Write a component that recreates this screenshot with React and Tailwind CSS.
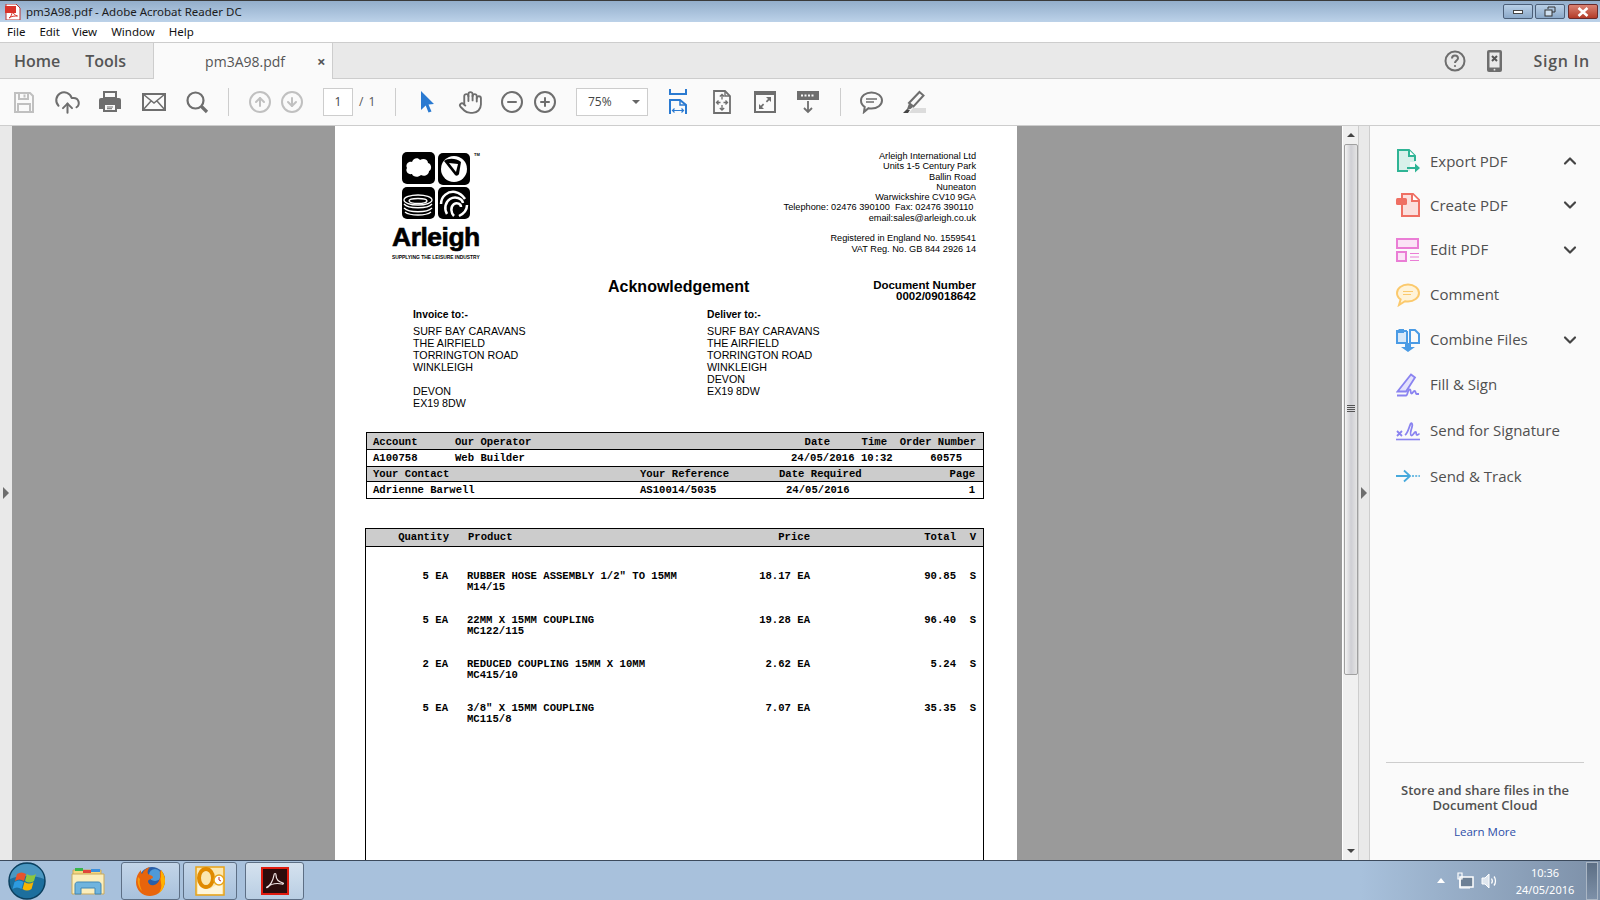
import { ChevronDown, ChevronUp, CircleArrowDown, CircleArrowUp, CircleMinus, CirclePlus, CloudUpload, Hand } from "lucide-react"

const gray = "#6e6e6e"

function SaveIcon() {
  return (
    <svg width="22" height="24" viewBox="0 0 22 24" fill="none" stroke="#c0c0c0" strokeWidth="2">
      <path d="M2 3h15l3 3v16H2z" />
      <path d="M6 3v6h9V3M11.500 4.500v3M5 22v-8h12v8" />
    </svg>
  )
}

function PrintIcon() {
  return (
    <svg width="24" height="24" viewBox="0 0 24 24">
      <path d="M6 2h12v6H6z" fill="none" stroke={gray} strokeWidth="2" />
      <path d="M3 8h18a2 2 0 0 1 2 2v9h-4v3H5v-3H1v-9a2 2 0 0 1 2-2z" fill={gray} />
      <path d="M7 15h10v5H7z" fill="#fafafa" />
      <path d="M9 17h6M9 18.700h5" stroke={gray} strokeWidth="1" />
    </svg>
  )
}

function MailIcon() {
  return (
    <svg width="24" height="20" viewBox="0 0 24 20" fill="none" stroke={gray} strokeWidth="2">
      <rect x="1" y="2" width="22" height="16" />
      <path d="M1 2l11 9 11-9M1 18l8-9M23 18l-8-9" strokeWidth="1.500" />
    </svg>
  )
}

function SearchIcon() {
  return (
    <svg width="24" height="24" viewBox="0 0 24 24" fill="none" stroke={gray}>
      <circle cx="10.500" cy="10.500" r="8" strokeWidth="2.200" />
      <path d="M16.500 16.500l5.500 5.500" strokeWidth="3.200" />
    </svg>
  )
}

function CursorIcon() {
  return (
    <svg width="16" height="24" viewBox="0 0 16 24">
      <path d="M2 1l13 13-5.500.5 3 7-3 1-2.800-7L2 20z" fill="#2a7ad1" />
    </svg>
  )
}

function FitWidthIcon() {
  return (
    <svg width="18" height="26" viewBox="0 0 18 26" fill="none" stroke="#2a7ad1" strokeWidth="2">
      <path d="M1 0v5h16V0" />
      <path d="M1 25V11h10l6 5v9" />
      <path d="M11 11v5h6" strokeWidth="1.500" />
      <path d="M3.500 21.500h11M5.500 19.500l-2 2 2 2M12.500 19.500l2 2-2 2" strokeWidth="1.200" />
    </svg>
  )
}

function FitPageIcon() {
  return (
    <svg width="18" height="24" viewBox="0 0 18 24" fill="none" stroke={gray} strokeWidth="1.800">
      <path d="M1 1h11l5 5v17H1z" />
      <path d="M12 1v5h5" strokeWidth="1.400" />
      <path d="M9 4.500v5M6.800 6.500L9 4.500l2.200 2M9 20v-5M6.800 18L9 20l2.200-2M3.500 12.500h4M5.500 10.500l-2 2 2 2M14.500 12.500h-4M12.500 10.500l2 2-2 2" strokeWidth="1.300" />
    </svg>
  )
}

function FullScreenIcon() {
  return (
    <svg width="22" height="22" viewBox="0 0 22 22">
      <rect x="1" y="1" width="20" height="20" fill="#fafafa" stroke={gray} strokeWidth="2" />
      <path d="M1 1h20v3H1z" fill={gray} />
      <path d="M12 6h5v5l-1.800-1.800-2.200 2.200-1.200-1.200 2.200-2.200zM10 18H5v-5l1.800 1.800L9 12.600l1.200 1.200L8 16z" fill={gray} />
    </svg>
  )
}

function ScrollModeIcon() {
  return (
    <svg width="22" height="24" viewBox="0 0 22 24" fill="none">
      <rect x="0" y="1" width="22" height="9" fill={gray} />
      <path d="M4 5.500h14" stroke="#fafafa" strokeWidth="2" strokeDasharray="2 1.500" />
      <path d="M11 11v11M7 18l4 4 4-4" stroke={gray} strokeWidth="1.800" />
    </svg>
  )
}

function CommentIcon() {
  return (
    <svg width="23" height="23" viewBox="0 0 23 23" fill="none" stroke={gray}>
      <path d="M11.500 1.500c5.800 0 10.500 3.500 10.500 8s-4.700 8-10.500 8c-1 0-2-.1-3-.3L4 21l.7-5.100C2.400 14.400 1 12.100 1 9.500c0-4.500 4.700-8 10.500-8z" strokeWidth="2" />
      <path d="M6 8h11M6 11h8" strokeWidth="1.300" />
    </svg>
  )
}

function HighlightIcon() {
  return (
    <svg width="24" height="24" viewBox="0 0 24 24">
      <path d="M7 23h17v-5H11z" fill="#dcdcdc" />
      <path d="M17.500 2l4 3.500-10 11-4.500-3.500z" fill="#fafafa" stroke={gray} strokeWidth="2" />
      <path d="M7 13.500l4 3.500-2.500 2H5z" fill={gray} />
      <path d="M1 23l4-4 3 1-2 3z" fill="#444" />
    </svg>
  )
}

function HelpIcon() {
  return (
    <svg width="22" height="22" viewBox="0 0 22 22" fill="none" stroke={gray} strokeWidth="2">
      <circle cx="11" cy="11" r="9.500" />
      <path d="M8 8.500c0-1.800 1.300-3 3-3s3 1.200 3 2.800c0 2.200-3 2.400-3 4.700" />
      <circle cx="11" cy="16" r="1.100" fill={gray} stroke="none" />
    </svg>
  )
}

function PhoneIcon() {
  return (
    <svg width="15" height="22" viewBox="0 0 15 22">
      <rect x="0" y="0" width="15" height="22" rx="2" fill={gray} />
      <rect x="2.500" y="2.500" width="10" height="15" fill="#e9e9e9" />
      <path d="M5 6l5 5M10 6l-5 5" stroke="#555" strokeWidth="2" />
      <circle cx="7.500" cy="19.700" r="0.900" fill="#e9e9e9" />
    </svg>
  )
}

function ExportIcon() {
  return (
    <svg width="24" height="24" viewBox="0 0 24 24" fill="none">
      <path d="M2 1h11l6 6v6H14v9H2z" fill="#d8f0ea" />
      <path d="M19 12V7l-6-6H2v21h10" stroke="#2fb495" strokeWidth="2" />
      <path d="M13 1v6h6" fill="#fff" stroke="#2fb495" strokeWidth="2" />
      <path d="M11 18h8v-3.500l5 4.500-5 4.500V20h-8z" fill="#2fb495" />
    </svg>
  )
}

function CreateIcon() {
  return (
    <svg width="24" height="24" viewBox="0 0 24 24" fill="none">
      <path d="M6 9V1h11l6 6v16H6z" fill="#fbdfdd" stroke="#ef6f63" strokeWidth="2" />
      <path d="M16 1v7h7" fill="#fff" stroke="#ef6f63" strokeWidth="2" />
      <rect x="0" y="5" width="11" height="7" rx="1.500" fill="#ef6f63" />
    </svg>
  )
}

function EditIcon() {
  return (
    <svg width="24" height="24" viewBox="0 0 24 24" fill="none" stroke="#ea7dd5" strokeWidth="2">
      <rect x="1" y="1" width="21" height="9" fill="#fbe3f6" />
      <rect x="1" y="14" width="9" height="9" fill="#fbe3f6" />
      <path d="M14 15.500h9M14 19h9M14 22.500h9" strokeWidth="1.200" />
    </svg>
  )
}

function PanelCommentIcon() {
  return (
    <svg width="24" height="24" viewBox="0 0 24 24" fill="none">
      <path d="M12 1.500c6 0 11 3.700 11 8.500s-5 8.500-11 8.500c-1 0-2-.1-3-.3L3 22l1.600-5.600C2.400 14.900 1 12.600 1 10c0-4.800 5-8.500 11-8.500z" fill="#fff3d8" stroke="#fbc96c" strokeWidth="2" />
      <path d="M7 8.500h10M7 11.500h8" stroke="#fbc96c" strokeWidth="1.200" />
    </svg>
  )
}

function CombineIcon() {
  return (
    <svg width="24" height="24" viewBox="0 0 24 24" fill="none">
      <path d="M2 3h9v12H2z" fill="#d7e8f9" />
      <path d="M11 3H1v12h10v-12" stroke="#4a9be5" strokeWidth="2" />
      <path d="M14 15h9V6l-4-4h-5v13" stroke="#4a9be5" strokeWidth="2" />
      <path d="M3 1h5v4H1V3z" fill="#4a9be5" />
      <path d="M9 15h6v4h4l-7 5-7-5h4z" fill="#4a9be5" />
    </svg>
  )
}

function FillSignIcon() {
  return (
    <svg width="24" height="24" viewBox="0 0 24 24" fill="none" stroke="#8a83f0" strokeWidth="1.800">
      <path d="M15 1.500l4 3-9 14H1.500z" fill="#e3e1fc" />
      <path d="M1 22.500h9c2 0 1.500-6 3.500-6s.5 4 2 4 1.500-2.500 3-2.500 1 3 2 3h2.500" />
    </svg>
  )
}

function SendSignIcon() {
  return (
    <svg width="24" height="22" viewBox="0 0 24 22" fill="none" stroke="#8a83f0" strokeWidth="1.800">
      <path d="M1 12l5 5M6 12l-5 5" />
      <path d="M9 16c3-2 4-8 5.500-11 1-2 2.500 0 1.500 3s-2 8-.5 8.500 2.500-3.500 4-3.500 0 3 1.500 3 1.500-1 2.500-1" />
      <path d="M0 20.500h24" strokeWidth="1.600" />
    </svg>
  )
}

function SendTrackIcon() {
  return (
    <svg width="24" height="14" viewBox="0 0 24 14" fill="none" stroke="#46a9dc" strokeWidth="1.800">
      <path d="M0 7h13M8 1.500L14 7l-6 5.500" />
      <path d="M16 7h8" strokeDasharray="2 1.200" strokeWidth="1.600" />
    </svg>
  )
}

function ArleighLogo() {
  return (
    <svg width="70" height="68" viewBox="0 0 70 68">
      <rect x="0" y="0" width="33" height="32" rx="5" fill="#000" />
      <path d="M5 16c-2-4 2-7 5-6 1-4 6-5 8-2 3-2 8-1 8 3 4 1 4 7 1 8 0 4-5 6-8 4-3 3-8 2-9-1-4 1-7-3-5-6z" fill="#fff" />
      <rect x="36" y="1" width="32" height="32" rx="5" fill="#000" />
      <circle cx="52" cy="17" r="13" fill="#fff" />
      <path d="M42 9c4-3 12-3 17 1l-2 12c-1 2-3 2-4 1z" fill="#000" />
      <path d="M47 11l9 1-2 8z" fill="#fff" />
      <rect x="0" y="35" width="33" height="32" rx="5" fill="#000" />
      <g fill="none" stroke="#fff" strokeWidth="1.300">
        <ellipse cx="16" cy="48" rx="14" ry="5" />
        <ellipse cx="16" cy="49" rx="9" ry="2.500" />
        <path d="M2 52c4 5 24 5 28 0M2 56c5 5 23 5 28 0M3 60c5 4 21 4 26 0" />
      </g>
      <rect x="36" y="35" width="32" height="32" rx="5" fill="#000" />
      <g fill="none" stroke="#fff" strokeWidth="2.500">
        <path d="M39 52c0-8 7-13 14-12 5 1 8 4 10 7" />
        <path d="M45 62c-3-5-2-12 3-15 5-3 12-1 13 4" />
        <path d="M52 64c-3-3-4-9 0-12 3-2 7 0 7 3" />
        <path d="M57 64c4-2 8-6 8-11" />
      </g>
    </svg>
  )
}

function StartOrb() {
  return (
    <svg width="38" height="38" viewBox="0 0 38 38">
      <circle cx="19" cy="19" r="18" fill="#1c6f9e" stroke="#0b3f5e" strokeWidth="1.500" />
      <path d="M2 17a17 15 0 0 1 34 0c-8-4-26-4-34 0z" fill="#5fa8d0" opacity="0.700" />
      <path d="M9 12c3-2 6-2 9 0l-2 7c-3-2-6-2-9 0z" fill="#e8532b" />
      <path d="M19 12c3 2 6 2 9 0l-2 7c-3 2-6 2-9 0z" fill="#8dc63f" />
      <path d="M6.500 20c3-2 6-2 9 0l-2 7c-3-2-6-2-9 0z" fill="#2d9be0" />
      <path d="M16.500 20c3 2 6 2 9 0l-2 7c-3 2-6 2-9 0z" fill="#f7b500" />
    </svg>
  )
}

function FolderIcon() {
  return (
    <svg width="34" height="30" viewBox="0 0 34 30">
      <path d="M2 4h28v22H2z" fill="#f5d87e" stroke="#c9a95a" />
      <path d="M4 2h8v3H4z" fill="#39b54a" />
      <path d="M12 4h8v3h-8z" fill="#e0463a" />
      <path d="M20 3h9v3h-9z" fill="#3b8fdc" />
      <path d="M1 8h32v20H1z" fill="#fbeebc" stroke="#c9a95a" />
      <path d="M4 28v-9c0-2 1-3 3-3h20c2 0 3 1 3 3v9h-6v-6H10v6z" fill="#6fb4de" stroke="#4287b5" />
    </svg>
  )
}

function FirefoxIcon() {
  return (
    <svg width="32" height="32" viewBox="0 0 32 32">
      <circle cx="17" cy="15" r="13" fill="#2a5fa8" />
      <circle cx="20" cy="10" r="6" fill="#4f9ad8" />
      <path d="M26 5c4 5 5 11 3 16-2 6-8 10-14 10C7 31 1 25 1 17 1 12 3 8 6 5c0 2 0 3 1 4 1-3 4-6 8-7-2 2-3 5-2 7 1 1 4 1 5 3 0 2-4 2-5 4 0 3 3 5 6 4 4-1 6-5 6-9 0-2-1-4 1-6z" fill="#e8640c" />
      <path d="M26 5c4 5 5 11 3 16-1 3-3 6-6 8 3-3 4-8 3-11 0-2-1-4 0-6z" fill="#ffb100" />
      <path d="M3 12C2 16 3 22 7 26c-2-4-3-9-2-12z" fill="#f89c0e" />
    </svg>
  )
}

function OutlookIcon() {
  return (
    <svg width="30" height="30" viewBox="0 0 30 30">
      <rect x="1" y="1" width="28" height="28" fill="#fbe7b0" stroke="#e8a317" strokeWidth="1.500" />
      <path d="M3 15l12 8 12-8v13H3z" fill="#fff6da" />
      <ellipse cx="11" cy="12" rx="7" ry="9" fill="none" stroke="#e08a00" strokeWidth="4" />
      <circle cx="24" cy="14" r="5" fill="#fff" stroke="#e8a317" strokeWidth="1.500" />
      <path d="M24 11v3l2 1" stroke="#c0392b" fill="none" />
    </svg>
  )
}

function AcrobatIcon() {
  return (
    <svg width="28" height="28" viewBox="0 0 28 28">
      <rect x="1" y="1" width="26" height="26" fill="#2b0c0c" stroke="#e01b0f" strokeWidth="2" />
      <path d="M6 20c3-1 6-6 7-12 .2-2 2-2 2 0 0 4 3 7 7 8 1 .5 0 1.500-1 1-5-1-11 0-14 3-1 1-2 .5-1 0z" fill="none" stroke="#f2e6e6" strokeWidth="1.200" />
    </svg>
  )
}

function WinButton({ className, children }) {
  return (
    <div className={`w-[30px] h-[15px] rounded-[2px] border border-[#4c5f78] flex items-center justify-center ${className}`}>{children}</div>
  )
}

const panelTools = [
  { label: "Export PDF", icon: <ExportIcon />, chevron: "up", h: "h-[44px]" },
  { label: "Create PDF", icon: <CreateIcon />, chevron: "down", h: "h-[44px]" },
  { label: "Edit PDF", icon: <EditIcon />, chevron: "down", h: "h-[45px]" },
  { label: "Comment", icon: <PanelCommentIcon />, h: "h-[45px]" },
  { label: "Combine Files", icon: <CombineIcon />, chevron: "down", h: "h-[45px]" },
  { label: "Fill & Sign", icon: <FillSignIcon />, h: "h-[45px]" },
  { label: "Send for Signature", icon: <SendSignIcon />, h: "h-[46px]" },
  { label: "Send & Track", icon: <SendTrackIcon />, h: "h-[46px]" },
]

const addressLines = ["Arleigh International Ltd", "Units 1-5 Century Park", "Ballin Road", "Nuneaton", "Warwickshire CV10 9GA", "Telephone: 02476 390100  Fax: 02476 390110\u00a0", "email:sales@arleigh.co.uk", "\u00a0", "Registered in England No. 1559541", "VAT Reg. No. GB 844 2926 14"]

const orderItems = [
  { qty: "5 EA", name: 'RUBBER HOSE ASSEMBLY 1/2" TO 15MM', code: "M14/15", price: "18.17 EA", total: "90.85" },
  { qty: "5 EA", name: "22MM X 15MM COUPLING", code: "MC122/115", price: "19.28 EA", total: "96.40" },
  { qty: "2 EA", name: "REDUCED COUPLING 15MM X 10MM", code: "MC415/10", price: "2.62 EA", total: "5.24" },
  { qty: "5 EA", name: '3/8" X 15MM COUPLING', code: "MC115/8", price: "7.07 EA", total: "35.35" },
]

export default function App() {
  return (
    <div className="w-[1600px] h-[900px] overflow-hidden flex flex-col bg-white font-['Open_Sans',sans-serif]">
      {/* title bar */}
      <div className="h-[22px] shrink-0 border-t border-[#3a3a3a] bg-gradient-to-b from-[#93aecb] to-[#bcd2e9] flex items-center pl-[5px] pr-[2px]">
        <svg width="16" height="16" viewBox="0 0 16 16">
          <path d="M1 0h10l4 4v12H1z" fill="#fff" stroke="#b33" />
          <path d="M0 2h11v7H0z" fill="#d9342b" />
          <path d="M4 14c2-1 3-4 3.500-7 1 3 2 4 5 5-3 0-6 0-8.500 2z" fill="none" stroke="#d9342b" />
        </svg>
        <span className="ml-[5px] text-[11.5px] text-[#1c1c1c] font-['Noto_Sans',sans-serif]">pm3A98.pdf - Adobe Acrobat Reader DC</span>
        <div className="ml-auto flex gap-[2px]">
          <WinButton className="bg-gradient-to-b from-[#b9cfe6] to-[#8ba9c9]"><div className="w-[10px] h-[4px] bg-white border border-[#444]" /></WinButton>
          <WinButton className="bg-gradient-to-b from-[#b9cfe6] to-[#8ba9c9]">
            <svg width="12" height="11" viewBox="0 0 12 11" fill="none" stroke="#333"><path d="M4 3V1h7v5H8" /><rect x="1" y="4" width="7" height="6" fill="#cfe0f0" /></svg>
          </WinButton>
          <WinButton className="ml-[1px] bg-gradient-to-b from-[#d98272] to-[#b33a27] border-[#6a2a2a]">
            <svg width="12" height="10" viewBox="0 0 12 10" stroke="#fff" strokeWidth="2.600"><path d="M1.500 1l9 8M10.500 1l-9 8" /></svg>
          </WinButton>
        </div>
      </div>

      {/* menu */}
      <div className="h-[20px] shrink-0 flex items-center text-[11.5px] text-[#111] font-['Noto_Sans',sans-serif]">
        <span className="ml-[7px]">File</span>
        <span className="ml-[14px]">Edit</span>
        <span className="ml-[12px]">View</span>
        <span className="ml-[14px]">Window</span>
        <span className="ml-[14px]">Help</span>
      </div>

      {/* tabs */}
      <div className="h-[37px] shrink-0 bg-[#e9e9e9] border-y border-[#cdcdcd] flex items-center text-[#555] text-[16px]">
        <span className="ml-[14px] font-semibold">Home</span>
        <span className="ml-[25px] font-semibold">Tools</span>
        <div className="ml-[27px] w-[180px] h-[36px] bg-[#fafafa] border-x border-[#cdcdcd] flex items-center text-[14px] mb-[-1px]">
          <span className="ml-[51px]">pm3A98.pdf</span>
          <span className="ml-[32px] text-[15px] font-bold">×</span>
        </div>
        <div className="ml-auto flex items-center">
          <HelpIcon />
          <div className="ml-[21px]"><PhoneIcon /></div>
          <span className="ml-[32px] mr-[10px] font-semibold tracking-[0.7px]">Sign In</span>
        </div>
      </div>

      {/* toolbar */}
      <div className="h-[47px] shrink-0 bg-[#fafafa] border-b border-[#cdcdcd] flex items-center pl-[10px]">
        <div className="w-7 flex justify-center"><SaveIcon /></div>
        <div className="w-7 flex justify-center ml-[15px]"><CloudUpload size={27} color={gray} strokeWidth={1.800} /></div>
        <div className="w-7 flex justify-center ml-[15px]"><PrintIcon /></div>
        <div className="w-7 flex justify-center ml-[16px]"><MailIcon /></div>
        <div className="w-7 flex justify-center ml-[15px]"><SearchIcon /></div>
        <div className="w-px h-[28px] bg-[#cdcdcd] ml-[17px]" />
        <div className="w-7 flex justify-center ml-[17px]"><CircleArrowUp size={24} color="#c0c0c0" strokeWidth={2} /></div>
        <div className="w-7 flex justify-center ml-[4px]"><CircleArrowDown size={24} color="#c0c0c0" strokeWidth={2} /></div>
        <div className="w-[30px] h-[28px] ml-[17px] bg-white border border-[#cdcdcd] flex items-center justify-center text-[12px] text-[#444]">1</div>
        <span className="w-[16px] ml-[6px] text-[12px] text-[#555] whitespace-nowrap tracking-[1px]">/ 1</span>
        <div className="w-px h-[28px] bg-[#cdcdcd] ml-[20px]" />
        <div className="w-7 flex justify-center ml-[17px]"><CursorIcon /></div>
        <div className="w-7 flex justify-center ml-[15px]"><Hand size={25} color={gray} strokeWidth={1.800} /></div>
        <div className="w-7 flex justify-center ml-[14px]"><CircleMinus size={24} color={gray} strokeWidth={2} /></div>
        <div className="w-7 flex justify-center ml-[5px]"><CirclePlus size={24} color={gray} strokeWidth={2} /></div>
        <div className="w-[72px] h-[28px] ml-[17px] bg-white border border-[#cdcdcd] flex items-center text-[12px] text-[#444] pl-[11px]">
          75%
          <div className="ml-auto mr-[7px] w-0 h-0 border-x-[4px] border-x-transparent border-t-[4px] border-t-[#666]" />
        </div>
        <div className="w-7 flex justify-center ml-[16px]"><FitWidthIcon /></div>
        <div className="w-7 flex justify-center ml-[16px]"><FitPageIcon /></div>
        <div className="w-7 flex justify-center ml-[15px]"><FullScreenIcon /></div>
        <div className="w-7 flex justify-center ml-[15px]"><ScrollModeIcon /></div>
        <div className="w-px h-[28px] bg-[#cdcdcd] ml-[18px]" />
        <div className="w-7 flex justify-center ml-[16px]"><CommentIcon /></div>
        <div className="w-7 flex justify-center ml-[15px]"><HighlightIcon /></div>
      </div>

      {/* main */}
      <div className="flex-1 min-h-0 flex">
        <div className="w-[12px] shrink-0 bg-[#e9e9e9] flex items-center pl-[3px]">
          <div className="w-0 h-0 border-y-[6px] border-y-transparent border-l-[6px] border-l-[#6e6e6e]" />
        </div>

        <div className="w-[1330px] shrink-0 bg-[#9a9a9a] overflow-hidden">
          {/* pdf page */}
          <div className="ml-[323px] w-[682px] h-[800px] bg-white text-black font-['Liberation_Sans',sans-serif]">
            <div className="h-[152px] flex justify-between">
              <div className="ml-[57px] mt-[26px] w-[90px]">
                <div className="ml-[10px] flex">
                  <ArleighLogo />
                  <span className="ml-[2px] text-[4px] font-bold leading-[6px]">TM</span>
                </div>
                <div className="mt-[5px] text-[26.5px] font-bold leading-[25px] tracking-[-0.5px] whitespace-nowrap [-webkit-text-stroke:0.6px_black]">Arleigh</div>
                <div className="mt-[4px] text-[4.9px] font-bold leading-[7px] whitespace-nowrap">SUPPLYING THE LEISURE INDUSTRY</div>
              </div>
              <div className="mr-[41px] mt-[25px] text-right text-[9.2px] leading-[10.3px] whitespace-pre">
                {addressLines.map((line, i) => <div key={i}>{line}</div>)}
              </div>
            </div>

            <div className="h-[31px] flex">
              <div className="ml-[273px] mt-[-3px] text-[16px] font-bold">Acknowledgement</div>
              <div className="ml-auto mr-[41px] pt-[2px] text-right text-[11.5px] font-bold leading-[11px]">
                <div>Document Number</div>
                <div>0002/09018642</div>
              </div>
            </div>

            <div className="h-[123px] flex text-[10.7px] leading-[12px]">
              <div className="ml-[78px] w-[294px]">
                <div className="font-bold text-[10.3px] mb-[4px]">Invoice to:-</div>
                <div>SURF BAY CARAVANS</div>
                <div>THE AIRFIELD</div>
                <div>TORRINGTON ROAD</div>
                <div>WINKLEIGH</div>
                <div className="mt-[12px]">DEVON</div>
                <div>EX19 8DW</div>
              </div>
              <div>
                <div className="font-bold text-[10.3px] mb-[4px]">Deliver to:-</div>
                <div>SURF BAY CARAVANS</div>
                <div>THE AIRFIELD</div>
                <div>TORRINGTON ROAD</div>
                <div>WINKLEIGH</div>
                <div>DEVON</div>
                <div>EX19 8DW</div>
              </div>
            </div>

            {/* order summary */}
            <div className="ml-[31px] w-[618px] border border-black font-['Liberation_Mono',monospace] font-bold text-[10.6px] leading-[14px]">
              <div className="h-[17px] bg-[#cccccc] border-b border-black flex items-center pl-[6px] pr-[7px] pt-[1px]">
                <span className="w-[82px]">Account</span>
                <span className="flex-1">Our Operator</span>
                <span className="w-[57px] text-right">Date</span>
                <span className="w-[57px] text-right">Time</span>
                <span className="w-[89px] text-right">Order Number</span>
              </div>
              <div className="h-[16px] flex items-center pl-[6px] pr-[21px]">
                <span className="w-[82px]">A100758</span>
                <span className="flex-1">Web Builder</span>
                <span className="w-[102px] whitespace-pre">24/05/2016 10:32</span>
                <span className="w-[69px] text-right">60575</span>
              </div>
              <div className="h-[16px] bg-[#cccccc] border-y border-black flex items-center pl-[6px] pr-[8px] pb-[1px]">
                <span className="w-[267px]">Your Contact</span>
                <span className="w-[139px]">Your Reference</span>
                <span className="flex-1">Date Required</span>
                <span>Page</span>
              </div>
              <div className="h-[16px] flex items-center pl-[6px] pr-[8px]">
                <span className="w-[267px]">Adrienne Barwell</span>
                <span className="w-[146px]">AS10014/5035</span>
                <span className="flex-1">24/05/2016</span>
                <span>1</span>
              </div>
            </div>

            {/* order lines */}
            <div className="mt-[29px] ml-[30px] w-[619px] h-[400px] border-x border-t border-black font-['Liberation_Mono',monospace] font-bold text-[10.6px] leading-[11px]">
              <div className="h-[18px] bg-[#cccccc] border-b border-black flex items-center pr-[7px]">
                <span className="w-[83px] text-right">Quantity</span>
                <span className="ml-[19px] flex-1">Product</span>
                <span>Price</span>
                <span className="w-[146px] text-right">Total</span>
                <span className="w-[20px] text-right">V</span>
              </div>
              <div className="pt-[24px]">
                {orderItems.map((item, i) => (
                  <div key={i} className="h-[44px] flex pr-[7px]">
                    <span className="w-[82px] text-right">{item.qty}</span>
                    <div className="ml-[19px] flex-1 whitespace-pre">
                      <div>{item.name}</div>
                      <div>{item.code}</div>
                    </div>
                    <span className="w-[70px] text-right">{item.price}</span>
                    <span className="w-[146px] text-right">{item.total}</span>
                    <span className="w-[20px] text-right">S</span>
                  </div>
                ))}
              </div>
            </div>
          </div>
        </div>

        {/* scrollbar */}
        <div className="w-[16px] shrink-0 bg-[#f0f0f0] border-l border-white flex flex-col items-center">
          <div className="h-[18px] flex items-center justify-center">
            <div className="w-0 h-0 border-x-[4px] border-x-transparent border-b-[4px] border-b-[#444]" />
          </div>
          <div className="w-[14px] h-[531px] rounded-[2px] border border-[#a0a0a0] bg-gradient-to-r from-[#f4f4f4] via-[#cfcfd4] to-[#e4e4e4] flex flex-col items-center pt-[260px] gap-[1px]">
            <div className="w-[8px] h-px bg-[#555]" />
            <div className="w-[8px] h-px bg-[#555]" />
            <div className="w-[8px] h-px bg-[#555]" />
            <div className="w-[8px] h-px bg-[#555]" />
          </div>
          <div className="mt-auto h-[18px] flex items-center justify-center">
            <div className="w-0 h-0 border-x-[4px] border-x-transparent border-t-[4px] border-t-[#444]" />
          </div>
        </div>

        <div className="w-[12px] shrink-0 bg-[#e9e9e9] border-x border-[#cdcdcd] flex items-center pl-[2px]">
          <div className="w-0 h-0 border-y-[6px] border-y-transparent border-l-[6px] border-l-[#6e6e6e]" />
        </div>

        {/* right panel */}
        <div className="flex-1 bg-[#fafafa] flex flex-col text-[#505050]">
          <div className="pt-[13px]">
            {panelTools.map((tool) => (
              <div key={tool.label} className={`${tool.h} flex items-center pl-[26px] pr-[20px] text-[15px]`}>
                <div className="w-[24px] flex justify-center">{tool.icon}</div>
                <span className="ml-[10px] flex-1 whitespace-nowrap">{tool.label}</span>
                {tool.chevron === "up" && <ChevronUp size={20} color="#444" strokeWidth={2.600} />}
                {tool.chevron === "down" && <ChevronDown size={20} color="#444" strokeWidth={2.600} />}
              </div>
            ))}
          </div>
          <div className="mt-auto mx-[16px] border-t border-[#cdcdcd] pt-[20px] pb-[20px] text-center">
            <div className="text-[13px] font-semibold leading-[15px]">Store and share files in the<br />Document Cloud</div>
            <div className="mt-[11px] text-[11.5px] leading-[16px] text-[#2d4ea8]">Learn More</div>
          </div>
        </div>
      </div>

      {/* taskbar */}
      <div className="h-[40px] shrink-0 border-t border-[#3c4a5c] bg-gradient-to-r from-[#a8c1dc] via-[#a8c1dc] via-85% to-[#7d90a8] flex items-center">
        <div className="ml-[8px]"><StartOrb /></div>
        <div className="ml-[25px]"><FolderIcon /></div>
        <div className="ml-[16px] w-[59px] h-[38px] rounded-[3px] border border-[#5d6f85] bg-gradient-to-b from-[#c3d5e8] to-[#a8c1dc] flex items-center justify-center"><FirefoxIcon /></div>
        <div className="ml-[3px] w-[54px] h-[38px] rounded-[3px] border border-[#5d6f85] bg-gradient-to-b from-[#c3d5e8] to-[#a8c1dc] flex items-center justify-center"><OutlookIcon /></div>
        <div className="ml-[8px] w-[59px] h-[38px] rounded-[3px] border border-[#5d6f85] bg-gradient-to-b from-[#d5e2ef] to-[#b9cee3] flex items-center justify-center"><AcrobatIcon /></div>
        <div className="ml-auto flex items-center text-white">
          <div className="w-0 h-0 border-x-[4px] border-x-transparent border-b-[5px] border-b-white" />
          <svg className="ml-[12px]" width="17" height="18" viewBox="0 0 17 18" fill="none" stroke="#fff">
            <rect x="3" y="5" width="13" height="10" fill="#6d8095" strokeWidth="1.500" />
            <path d="M1 1h4v6H1zM3 7v9h10" strokeWidth="1.200" />
          </svg>
          <svg className="ml-[7px]" width="17" height="18" viewBox="0 0 17 18" fill="none" stroke="#fff">
            <path d="M1 6h3l4-4v14l-4-4H1z" fill="#dfe6ee" />
            <path d="M10.500 6.500c1 1.500 1 3.500 0 5M13 4.500c2 2.500 2 6.500 0 9" strokeWidth="1.300" />
          </svg>
          <div className="ml-[6px] w-[82px] text-center text-[11px] leading-[17px] font-['Noto_Sans',sans-serif]">
            <div>10:36</div>
            <div>24/05/2016</div>
          </div>
          <div className="mr-[2px] w-[12px] h-[38px] border border-[#aab6c4] bg-gradient-to-b from-[#5d6f85] to-[#7d90a8]" />
        </div>
      </div>
    </div>
  )
}
